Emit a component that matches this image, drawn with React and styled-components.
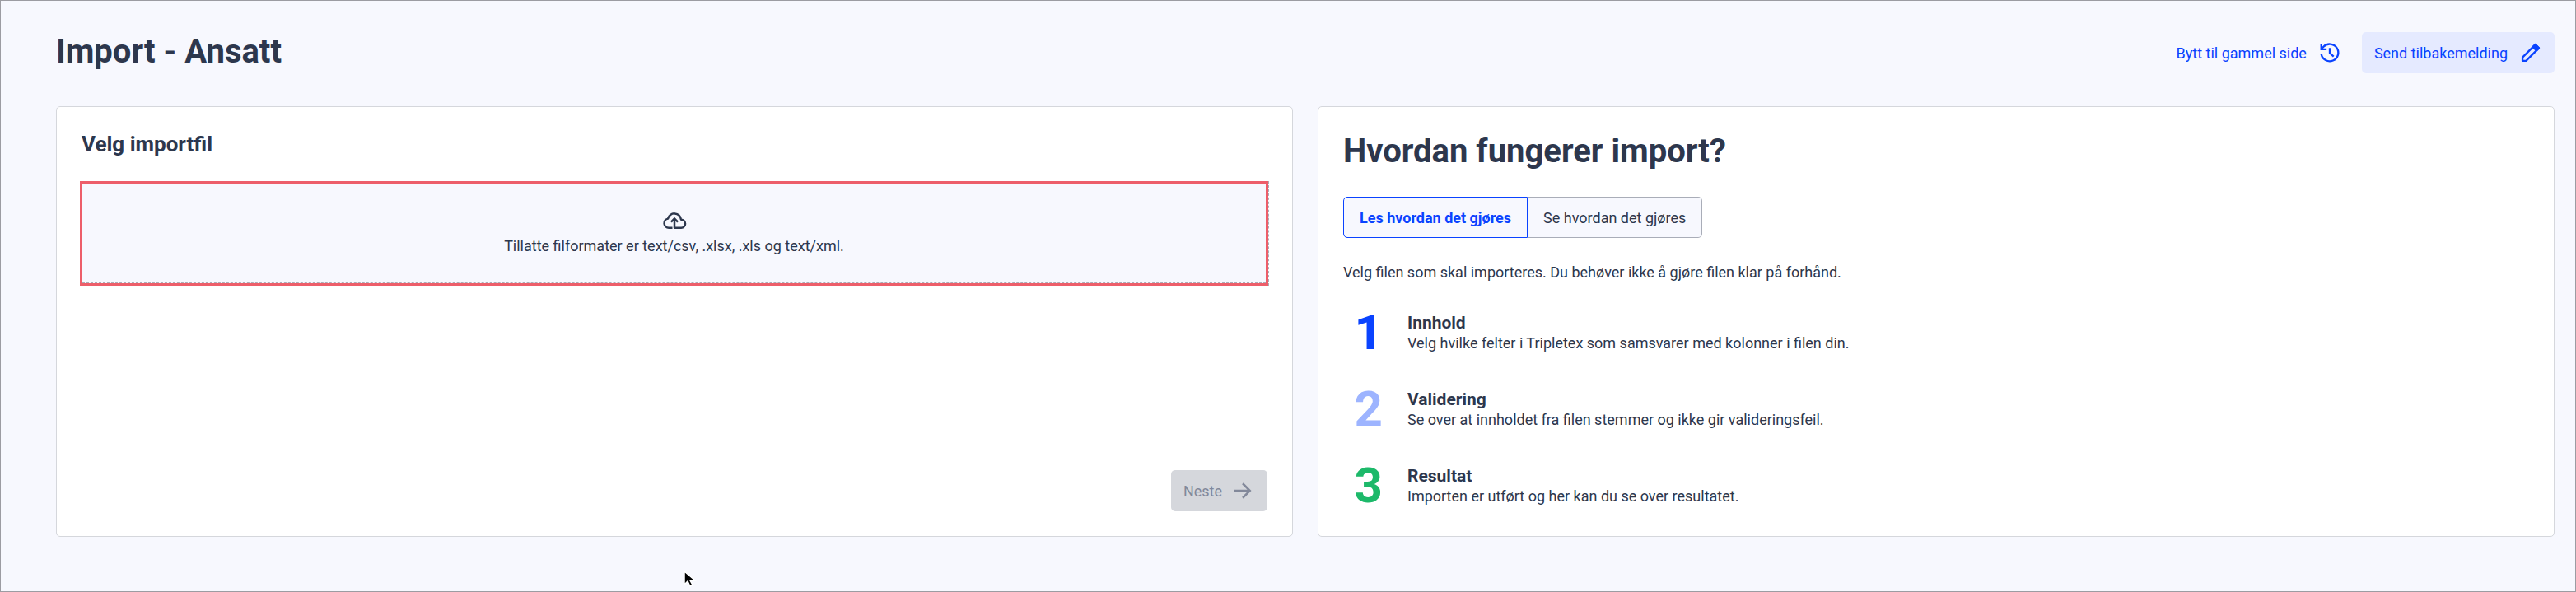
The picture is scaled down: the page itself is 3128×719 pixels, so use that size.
import React, { useState } from 'react';
import styled, { createGlobalStyle } from 'styled-components';

const steps = [
    { id: 1, color: '#0a43ff', title: 'Innhold', text: 'Velg hvilke felter i Tripletex som samsvarer med kolonner i filen din.' },
    { id: 2, color: '#9db4ff', title: 'Validering', text: 'Se over at innholdet fra filen stemmer og ikke gir valideringsfeil.' },
    { id: 3, color: '#1db96a', title: 'Resultat', text: 'Importen er utført og her kan du se over resultatet.' }
];

const Icon = ({ size = 28, children }) => (
    <svg width={size} height={size} viewBox='0 0 24 24' fill='none' stroke='currentColor' strokeWidth='2' aria-hidden='true'>
        {children}
    </svg>
);

const HistoryIcon = () => (
    <Icon>
        <path d='M3.200 13.500a8.900 8.900 0 1 0 2.300-7.700L3.500 8' />
        <path d='M3.200 3v5.500h5.500' />
        <path d='M12 7v5.300l4 3.700' />
    </Icon>
);

const PencilIcon = () => (
    <Icon>
        <path d='M3.500 16.800 16.800 3.500l3.700 3.700L7.200 20.500H3.500z' strokeLinejoin='round' />
        <path d='M14.300 6 16.800 3.500l3.700 3.700L18 9.700z' fill='currentColor' strokeLinejoin='round' />
    </Icon>
);

const CloudUploadIcon = () => (
    <Icon size={30}>
        <path d='M10 19H6.500a4.500 4.500 0 0 1-.9-8.900A6.500 6.500 0 0 1 18.400 11 4 4 0 0 1 18.500 19H12V10' strokeLinejoin='round' />
        <path d='M8.700 13.300 12 10l3.300 3.300' />
    </Icon>
);

const ArrowIcon = () => (
    <Icon size={30}>
        <path d='M4 12h15M12 5l7 7-7 7' />
    </Icon>
);

const App = () => {
    const [activeTab, setActiveTab] = useState('read');

    return (
        <Page>
            <GlobalStyle />
            <Rail />
            <Content>
                <Header>
                    <PageTitle>Import - Ansatt</PageTitle>
                    <Actions>
                        <Button type='button'>Bytt til gammel side <HistoryIcon /></Button>
                        <Button type='button' $filled>Send tilbakemelding <PencilIcon /></Button>
                    </Actions>
                </Header>
                <Columns>
                    <Card>
                        <CardTitle>Velg importfil</CardTitle>
                        <DropFrame>
                            <DropZone>
                                <FileInput type='file' accept='.csv,.xlsx,.xls,.xml' />
                                <DropText>
                                    <CloudUploadIcon />
                                    Tillatte filformater er text/csv, .xlsx, .xls og text/xml.
                                </DropText>
                            </DropZone>
                        </DropFrame>
                        <CardFooter>
                            <NextButton type='button' disabled>Neste <ArrowIcon /></NextButton>
                        </CardFooter>
                    </Card>
                    <Card>
                        <HelpTitle>Hvordan fungerer import?</HelpTitle>
                        <Tabs role='tablist'>
                            <Tab type='button' role='tab' aria-selected={activeTab === 'read'} $active={activeTab === 'read'} onClick={() => setActiveTab('read')}>
                                Les hvordan det gjøres
                            </Tab>
                            <Tab type='button' role='tab' aria-selected={activeTab === 'watch'} $active={activeTab === 'watch'} onClick={() => setActiveTab('watch')}>
                                Se hvordan det gjøres
                            </Tab>
                        </Tabs>
                        <Intro>Velg filen som skal importeres. Du behøver ikke å gjøre filen klar på forhånd.</Intro>
                        <Steps>
                            {steps.map(step => (
                                <Step key={step.id}>
                                    <StepNumber $color={step.color}>{step.id}</StepNumber>
                                    <div>
                                        <StepTitle>{step.title}</StepTitle>
                                        <StepText>{step.text}</StepText>
                                    </div>
                                </Step>
                            ))}
                        </Steps>
                    </Card>
                </Columns>
            </Content>
            <Cursor width='20' height='24' viewBox='0 0 20 24' aria-hidden='true'>
                <path d='M2 1v16l4-4 3 6 3-1.500-3-5.500h6z' fill='#000' stroke='#fff' strokeWidth='1.500' />
            </Cursor>
        </Page>
    );
};

export default App;


const GlobalStyle = createGlobalStyle`
    * {
        box-sizing: border-box;
    }
    body {
        margin: 0;
        background: #f7f8fe;
        color: #2d374d;
        font-family: Roboto, "Liberation Sans", sans-serif;
        font-size: 18px;
    }
    h1, h2, h3, p, ol {
        margin: 0;
        padding: 0;
    }
    button {
        font: inherit;
        cursor: pointer;
    }
    svg {
        flex: none;
    }
`;

const Page = styled.div`
    display: flex;
    min-height: 100vh;
    border: 1px solid #9c9ca2;
`;

const Rail = styled.div`
    width: 14px;
    border-right: 1px solid #e3e4ea;
`;

const Content = styled.main`
    flex: 1;
    padding: 38px 25px 60px 53px;
`;

const Header = styled.header`
    display: flex;
    justify-content: space-between;
    align-items: flex-start;
    margin-bottom: 40px;
`;

const PageTitle = styled.h1`
    font-size: 40px;
    font-weight: 700;
    line-height: 48px;
`;

const Actions = styled.div`
    display: flex;
    gap: 10px;
`;

const Button = styled.button`
    display: flex;
    align-items: center;
    gap: 14px;
    height: 50px;
    padding: 0 15px;
    border: none;
    border-radius: 5px;
    background: ${props => props.$filled ? '#e5eaff' : 'transparent'};
    color: #0a43ff;
`;

const NextButton = styled(Button)`
    gap: 10px;
    background: #d5d7dc;
    color: #82889a;
    cursor: default;
`;

const Columns = styled.div`
    display: grid;
    grid-template-columns: 1fr 1fr;
    gap: 30px;
`;

const Card = styled.section`
    display: flex;
    flex-direction: column;
    padding: 30px;
    background: #fff;
    border: 1px solid #d5d7dc;
    border-radius: 5px;
`;

const CardTitle = styled.h2`
    margin-bottom: 30px;
    font-size: 26px;
    font-weight: 700;
    line-height: 30px;
`;

const DropFrame = styled.div`
    margin: 0 -2px;
    border-right: 1px dashed #a9adb8;
`;

const DropZone = styled.label`
    display: block;
    border: 3px solid #ed5e6a;
    background: #f7f8fe;
    cursor: pointer;
`;

const FileInput = styled.input`
    position: absolute;
    opacity: 0;
    width: 1px;
    height: 1px;
`;

const DropText = styled.span`
    display: flex;
    flex-direction: column;
    align-items: center;
    gap: 2px;
    padding: 30px 0;
    border-bottom: 1px dashed #a9adb8;
    line-height: 28px;
`;

const CardFooter = styled.div`
    display: flex;
    justify-content: flex-end;
    margin-top: auto;
`;

const HelpTitle = styled.h2`
    margin-bottom: 31px;
    font-size: 40px;
    font-weight: 700;
    line-height: 48px;
`;

const Tabs = styled.div`
    display: flex;
    margin-bottom: 28px;
`;

const Tab = styled.button`
    height: 50px;
    padding: 0 19px;
    background: #f7f8fe;
    border: 1px solid ${props => props.$active ? '#0a43ff' : '#a9adb8'};
    color: ${props => props.$active ? '#0a43ff' : 'inherit'};
    font-weight: ${props => props.$active ? 700 : 400};
    &:first-child {
        border-radius: 5px 0 0 5px;
    }
    &:last-child {
        border-radius: 0 5px 5px 0;
        border-left: none;
    }
`;

const Intro = styled.p`
    margin-bottom: 28px;
    line-height: 28px;
`;

const Steps = styled.ol`
    display: flex;
    flex-direction: column;
    gap: 31px;
    list-style: none;
`;

const Step = styled.li`
    display: flex;
    align-items: center;
    gap: 30px;
`;

const StepNumber = styled.span`
    width: 48px;
    text-align: right;
    font-size: 60px;
    font-weight: 700;
    line-height: 62px;
    color: ${props => props.$color};
`;

const StepTitle = styled.h3`
    font-size: 21px;
    font-weight: 700;
    line-height: 25px;
`;

const StepText = styled.p`
    line-height: 24px;
`;

// sits over the page like the system pointer
const Cursor = styled.svg`
    position: absolute;
    left: 829px;
    top: 693px;
`;
